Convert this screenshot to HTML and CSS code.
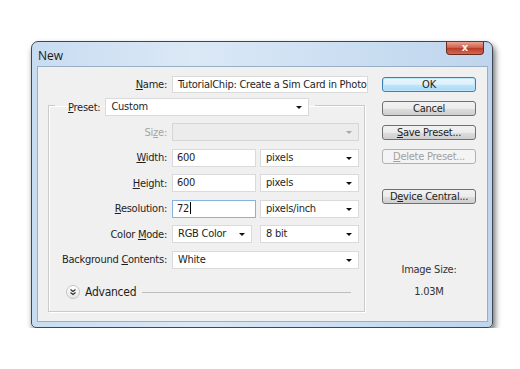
FILE: index.html
```html
<!DOCTYPE html>
<html lang="en">
<head>
    <meta charset="UTF-8">
    <title>New</title>
    <link rel="stylesheet" href="styles.css">
</head>
<body>
    <div class="window">
        <div class="titlebar">
            <span class="title">New</span>
            <span class="close">x</span>
        </div>
        <div class="client">
            <div class="main">
                <div class="name-row">
                    <span class="label"><u>N</u>ame:</span>
                    <div class="field name-field">TutorialChip: Create a Sim Card in Photo</div>
                </div>
                <fieldset class="group">
                    <legend class="preset">
                        <span class="label"><u>P</u>reset:</span>
                        <div class="field select preset-select">Custom</div>
                    </legend>
                    <div class="rows">
                        <span class="label disabled">Si<u>z</u>e:</span>
                        <div class="field select is-disabled"></div>

                        <span class="label"><u>W</u>idth:</span>
                        <div class="pair">
                            <div class="field num">600</div>
                            <div class="field select unit">pixels</div>
                        </div>

                        <span class="label"><u>H</u>eight:</span>
                        <div class="pair">
                            <div class="field num">600</div>
                            <div class="field select unit">pixels</div>
                        </div>

                        <span class="label"><u>R</u>esolution:</span>
                        <div class="pair">
                            <div class="field num focused">72<span class="caret"></span></div>
                            <div class="field select unit">pixels/inch</div>
                        </div>

                        <span class="label">Color <u>M</u>ode:</span>
                        <div class="pair">
                            <div class="field select mode">RGB Color</div>
                            <div class="field select unit">8 bit</div>
                        </div>

                        <span class="label">Background <u>C</u>ontents:</span>
                        <div class="field select">White</div>
                    </div>
                    <div class="advanced">
                        <span class="toggle">
                            <svg viewBox="0 0 8 8" width="8" height="8">
                                <path d="M1.5 1.5 L4 3.5 L6.5 1.5 M1.5 4.5 L4 6.5 L6.5 4.5"></path>
                            </svg>
                        </span>
                        <span class="adv-text">Advanced</span>
                        <span class="rule"></span>
                    </div>
                </fieldset>
            </div>
            <div class="side">
                <button class="btn default">OK</button>
                <button class="btn">Cancel</button>
                <button class="btn"><u>S</u>ave Preset...</button>
                <button class="btn off"><u>D</u>elete Preset...</button>
                <button class="btn device">D<u>e</u>vice Central...</button>
                <div class="image-size">
                    <div>Image Size:</div>
                    <div class="size-value">1.03M</div>
                </div>
            </div>
        </div>
    </div>
</body>
</html>
```

FILE: styles.css
```css
body {
    margin: 0;
    background-color: #ffffff;
    font-family: "DejaVu Sans Condensed", "DejaVu Sans", sans-serif;
    font-stretch: condensed;
    font-size: 11px;
    letter-spacing: -0.25px;
    color: #1e1e1e;
}
.window {
    box-sizing: border-box;
    width: 462px;
    height: 287px;
    margin: 41px 0 0 31px;
    border: 1px solid #3e4852;
    border-radius: 7px 7px 5px 5px;
    padding: 0 4px 5px 5px;
    display: flex;
    flex-direction: column;
    background: linear-gradient(to right, #c8dcf1, #dbe8f6 35%, #cfe1f3 60%, #bed5ed);
    box-shadow: 2px 4px 6px rgba(0, 0, 0, 0.6);
}
.titlebar {
    height: 24px;
    display: flex;
    justify-content: space-between;
    align-items: flex-start;
}
.title {
    padding: 5px 0 0 1px;
    font-family: "Open Sans", sans-serif;
    font-stretch: normal;
    font-size: 12px;
    letter-spacing: 0;
    color: #1a1a1a;
}
.close {
    width: 38px;
    height: 13px;
    margin-right: 4px;
    border: 1px solid #6d2a22;
    border-top: none;
    border-radius: 0 0 4px 4px;
    box-sizing: border-box;
    background: linear-gradient(#e8a394, #cf5a45 50%, #b83a26 51%, #d46a4f);
    color: #f4f4f4;
    font-family: "DejaVu Sans", sans-serif;
    font-weight: bold;
    font-size: 11px;
    line-height: 11px;
    letter-spacing: 0;
    text-align: center;
}
.client {
    flex: 1;
    display: flex;
    background-color: #f0f0f0;
    border: 1px solid #98afc6;
}
.main {
    width: 320px;
    padding: 9px 0 0 10px;
}
.label {
    white-space: nowrap;
}
.disabled {
    color: #a5a5a5;
}
.name-row {
    display: flex;
    align-items: center;
    gap: 5px;
}
.name-row .label {
    width: 119px;
    text-align: right;
}
.field {
    box-sizing: border-box;
    height: 18px;
    line-height: 16px;
    padding-left: 5px;
    background-color: #ffffff;
    border: 1px solid #dadada;
    white-space: nowrap;
    overflow: hidden;
    position: relative;
}
.name-field {
    width: 196px;
    height: 17px;
    line-height: 15px;
}
.select::after {
    content: "";
    position: absolute;
    right: 6px;
    top: 7px;
    border-left: 3px solid transparent;
    border-right: 3px solid transparent;
    border-top: 3px solid #111111;
}
.is-disabled {
    background-color: #ececec;
    border-color: #d6d6d6;
}
.is-disabled::after {
    border-top-color: #a8a8a8;
}
.group {
    box-sizing: border-box;
    width: 317px;
    margin: 1px 0 0 0;
    padding: 0 0 11px 0;
    border: 1px solid #cacaca;
    box-shadow: inset 1px 1px 0 #ffffff, 1px 1px 0 #ffffff;
}
.preset {
    display: flex;
    align-items: center;
    gap: 5px;
    margin-left: 6px;
    padding: 4px 6px 0 13px;
}
.preset-select {
    width: 204px;
}
.rows {
    display: grid;
    grid-template-columns: 118px 187px;
    column-gap: 5px;
    grid-auto-rows: 18px;
    row-gap: 7.6px;
    margin-top: 7px;
}
.rows .label {
    text-align: right;
    align-self: center;
}
.pair {
    display: flex;
    justify-content: space-between;
}
.num {
    width: 84px;
    padding-left: 4px;
}
.mode {
    width: 80px;
}
.unit {
    width: 99px;
}
.focused {
    border-color: #86b3de;
}
.caret {
    display: inline-block;
    width: 1px;
    height: 12px;
    margin-left: 1px;
    vertical-align: -2px;
    background-color: #000000;
}
.advanced {
    display: flex;
    align-items: center;
    height: 15px;
    margin: 16px 13px 0 17px;
}
.toggle {
    box-sizing: border-box;
    width: 14px;
    height: 14px;
    border-radius: 50%;
    border: 1px solid #c4c4c4;
    background: linear-gradient(#ffffff, #e6e6e6);
    display: flex;
    align-items: center;
    justify-content: center;
}
.toggle svg {
    fill: none;
    stroke: #333333;
    stroke-width: 1.2;
}
.adv-text {
    margin-left: 5px;
    font-size: 12px;
}
.rule {
    flex: 1;
    height: 1px;
    margin-left: 6px;
    background-color: #bdbdbd;
}
.side {
    width: 94px;
    margin-left: 14px;
    padding-top: 10px;
    display: flex;
    flex-direction: column;
}
.btn {
    box-sizing: border-box;
    height: 15px;
    margin-bottom: 9px;
    padding: 0;
    border: 1px solid #707070;
    border-radius: 3px;
    background: linear-gradient(#f2f2f2, #ebebeb 50%, #dddddd 51%, #cfcfcf);
    font-family: inherit;
    font-stretch: condensed;
    font-size: 11px;
    letter-spacing: -0.25px;
    line-height: 13px;
    color: #1e1e1e;
}
.default {
    border-color: #3c7fb1;
    background: linear-gradient(#eaf6fd, #d9f0fc 50%, #bee6fd 51%, #a7d9f5);
    box-shadow: inset 0 0 0 1px #bfe6fb;
}
.off {
    border-color: #adb2b5;
    background: #f4f4f4;
    color: #a0a0a0;
}
.device {
    margin-top: 16px;
}
.image-size {
    margin-top: 50px;
    text-align: center;
    line-height: 13px;
    color: #333333;
}
.size-value {
    margin-top: 9px;
}
```
